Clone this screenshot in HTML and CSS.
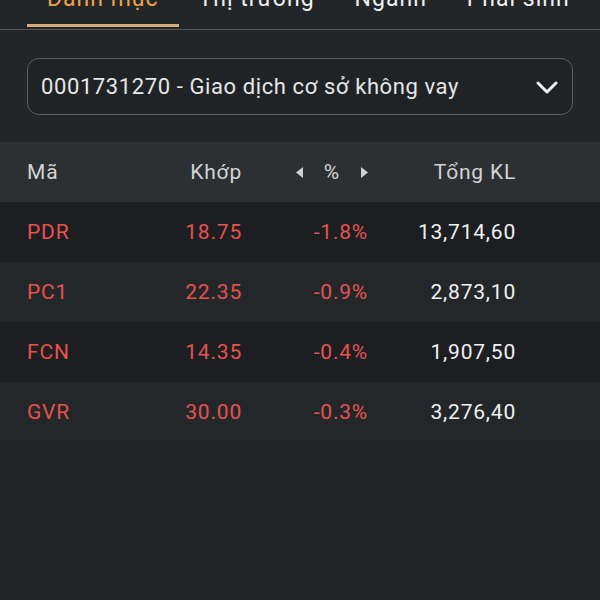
FILE: index.html
```html
<!DOCTYPE html>
<html lang="vi">
<head>
    <meta charset="UTF-8">
    <meta name="viewport" content="width=device-width, initial-scale=1.0">
    <title>Danh mục</title>
    <link rel="stylesheet" href="styles.css">
</head>
<body>
    <nav class="tabs">
        <div class="tab active">Danh mục</div>
        <div class="tab">Thị trường</div>
        <div class="tab">Ngành</div>
        <div class="tab">Phái sinh</div>
    </nav>

    <div class="account-wrap">
        <div class="account-select">
            <span>0001731270 - Giao dịch cơ sở không vay</span>
            <svg class="chevron" width="22" height="14" viewBox="0 0 22 14">
                <path d="M2 2 L11 11 L20 2" fill="none" stroke="#f2f2f2" stroke-width="3" stroke-linecap="round" stroke-linejoin="round"/>
            </svg>
        </div>
    </div>

    <div class="table">
        <div class="row head">
            <div class="cell code">Mã</div>
            <div class="cell num">Khớp</div>
            <div class="cell num pct-head">
                <svg width="8" height="11" viewBox="0 0 8 11"><path d="M7 0 L7 11 L0 5.5 Z" fill="#cfd0d1"/></svg>
                <span>%</span>
                <svg width="8" height="11" viewBox="0 0 8 11"><path d="M1 0 L1 11 L8 5.5 Z" fill="#cfd0d1"/></svg>
            </div>
            <div class="cell num">Tổng KL</div>
        </div>
        <div class="row">
            <div class="cell code down">PDR</div>
            <div class="cell num down">18.75</div>
            <div class="cell num down">-1.8%</div>
            <div class="cell num vol">13,714,60</div>
        </div>
        <div class="row">
            <div class="cell code down">PC1</div>
            <div class="cell num down">22.35</div>
            <div class="cell num down">-0.9%</div>
            <div class="cell num vol">2,873,10</div>
        </div>
        <div class="row">
            <div class="cell code down">FCN</div>
            <div class="cell num down">14.35</div>
            <div class="cell num down">-0.4%</div>
            <div class="cell num vol">1,907,50</div>
        </div>
        <div class="row">
            <div class="cell code down">GVR</div>
            <div class="cell num down">30.00</div>
            <div class="cell num down">-0.3%</div>
            <div class="cell num vol">3,276,40</div>
        </div>
    </div>
</body>
</html>
```

FILE: styles.css
```css
body {
    margin: 0;
    height: 600px;
    overflow: hidden;
    background: #232629;
    font-family: Roboto, "Liberation Sans", sans-serif;
    color: #e8e8e8;
}

/* tabs */
.tabs {
    display: flex;
    padding-left: 27px;
    height: 29px;
    border-bottom: 1px solid #55585b;
    overflow: hidden;
}

.tab {
    padding: 0 20px;
    margin-top: -14px;
    font-size: 23px;
    letter-spacing: 1px;
    line-height: 26px;
    height: 41px;
    color: #f0f0f0;
    box-sizing: border-box;
}

.tab.active {
    color: #eea24c;
    border-bottom: 3px solid #d6aa7c;
}

/* account select */
.account-wrap {
    padding: 28px 27px 27px 27px;
}

.account-select {
    display: flex;
    align-items: center;
    justify-content: space-between;
    height: 57px;
    box-sizing: border-box;
    padding: 0 14px 0 13px;
    border: 1px solid #5d6063;
    border-radius: 12px;
    background: #202326;
    font-size: 22px;
    letter-spacing: 0.6px;
    color: #e6e6e6;
}

.chevron {
    margin-top: 2px;
}

/* table */
.row {
    display: grid;
    grid-template-columns: 123px 92px 126px 148px;
    padding-left: 27px;
    height: 60px;
    align-items: center;
    font-size: 21px;
    letter-spacing: 0.8px;
    background: #1c1e21;
}

.row:nth-child(odd) {
    background: #24272a;
}

.row.head {
    background: #2d3033;
    color: #d2d3d4;
}

.cell.num {
    text-align: right;
}

.pct-head {
    display: flex;
    justify-content: flex-end;
    align-items: center;
    gap: 20px;
}

.down {
    color: #e5534e;
}

.vol {
    color: #f0f0f0;
}
```
